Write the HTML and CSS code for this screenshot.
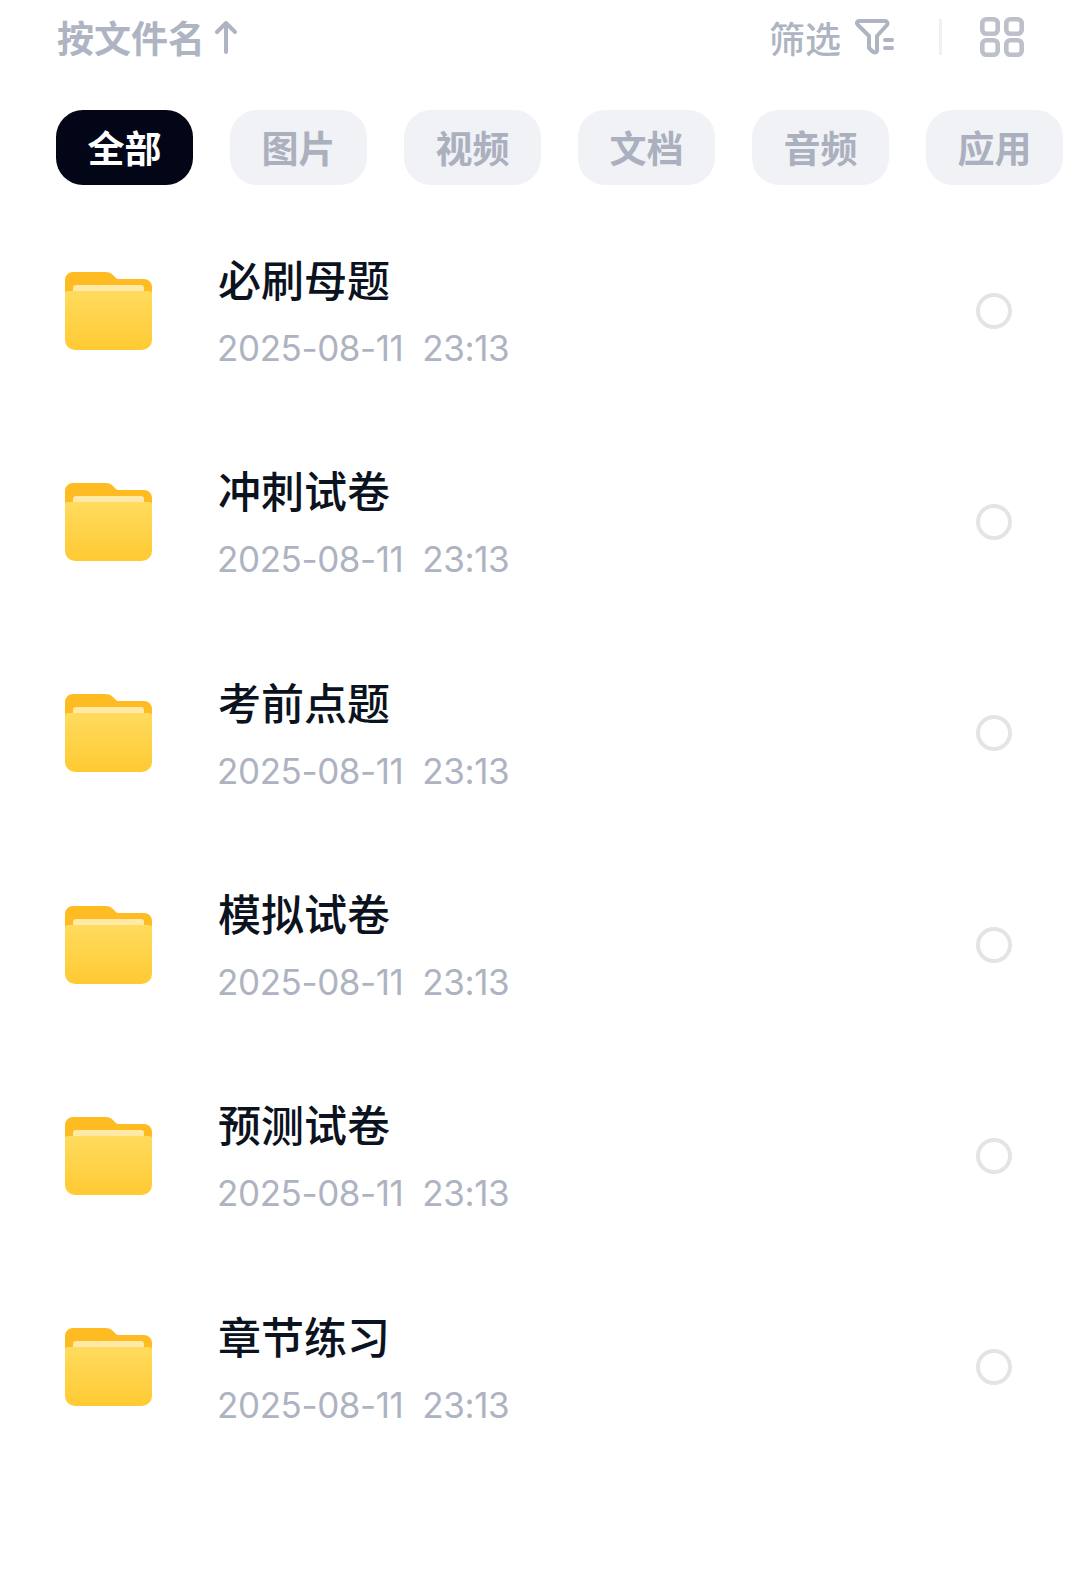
FILE: index.html
```html
<!DOCTYPE html>
<html lang="zh-CN">
<head>
    <meta charset="UTF-8">
    <meta name="viewport" content="width=device-width, initial-scale=1.0">
    <title>文件列表</title>
    <link rel="stylesheet" href="styles.css">
</head>
<body>
    <svg class="svg-defs" width="0" height="0">
        <defs>
            <linearGradient id="folderFront" x1="0" y1="0" x2="0" y2="1">
                <stop offset="0" stop-color="#ffdb5e"/>
                <stop offset="1" stop-color="#ffca33"/>
            </linearGradient>
            <symbol id="folder" viewBox="0 0 87 78">
                <path d="M0 8a8 8 0 0 1 8-8h32c4 0 6 1 8 3l3 3c1 1 2 1 4 1h24a8 8 0 0 1 8 8v20H0z" fill="#ffbb22"/>
                <rect x="8" y="13" width="71" height="20" rx="3" fill="#ffe9a6"/>
                <path d="M0 21c0-1 1-2 3-2h5h71h5c2 0 3 1 3 2v47a10 10 0 0 1-10 10H10A10 10 0 0 1 0 68z" fill="url(#folderFront)"/>
            </symbol>
        </defs>
    </svg>

    <div class="page">
        <div class="toolbar">
            <div class="sort">
                <span>按文件名</span>
                <svg class="sort-arrow" width="24" height="36" viewBox="0 0 24 36" fill="none" stroke="currentColor" stroke-width="4" stroke-linecap="round" stroke-linejoin="round">
                    <path d="M12 33V4M3 13l9-9 9 9"/>
                </svg>
            </div>
            <div class="tools">
                <span>筛选</span>
                <svg class="filter-icon" width="40" height="36" viewBox="0 0 40 36" fill="none" stroke="currentColor" stroke-width="4" stroke-linecap="round" stroke-linejoin="round">
                    <path d="M4 2h26c2 0 3 2 2 4L22 17v14c0 3-3 3-5 1l-3-3V17L3 6C1 4 2 2 4 2z"/>
                    <path d="M30 21h7M30 29h7"/>
                </svg>
                <i class="divider"></i>
                <svg class="grid-icon" width="44" height="40" viewBox="0 0 44 40" fill="none" stroke="currentColor" stroke-width="4.6">
                    <rect x="2.3" y="2.3" width="15.4" height="14.4" rx="4"/>
                    <rect x="26.3" y="2.3" width="15.4" height="14.4" rx="4"/>
                    <rect x="2.3" y="23.3" width="15.4" height="14.4" rx="4"/>
                    <rect x="26.3" y="23.3" width="15.4" height="14.4" rx="4"/>
                </svg>
            </div>
        </div>

        <div class="tabs">
            <div class="tab active">全部</div>
            <div class="tab">图片</div>
            <div class="tab">视频</div>
            <div class="tab">文档</div>
            <div class="tab">音频</div>
            <div class="tab">应用</div>
        </div>

        <ul class="file-list">
            <li class="file-row">
                <svg class="folder"><use href="#folder"/></svg>
                <div class="file-info">
                    <div class="file-name">必刷母题</div>
                    <div class="file-date">2025-08-11&nbsp; 23:13</div>
                </div>
                <i class="radio"></i>
            </li>
            <li class="file-row">
                <svg class="folder"><use href="#folder"/></svg>
                <div class="file-info">
                    <div class="file-name">冲刺试卷</div>
                    <div class="file-date">2025-08-11&nbsp; 23:13</div>
                </div>
                <i class="radio"></i>
            </li>
            <li class="file-row">
                <svg class="folder"><use href="#folder"/></svg>
                <div class="file-info">
                    <div class="file-name">考前点题</div>
                    <div class="file-date">2025-08-11&nbsp; 23:13</div>
                </div>
                <i class="radio"></i>
            </li>
            <li class="file-row">
                <svg class="folder"><use href="#folder"/></svg>
                <div class="file-info">
                    <div class="file-name">模拟试卷</div>
                    <div class="file-date">2025-08-11&nbsp; 23:13</div>
                </div>
                <i class="radio"></i>
            </li>
            <li class="file-row">
                <svg class="folder"><use href="#folder"/></svg>
                <div class="file-info">
                    <div class="file-name">预测试卷</div>
                    <div class="file-date">2025-08-11&nbsp; 23:13</div>
                </div>
                <i class="radio"></i>
            </li>
            <li class="file-row">
                <svg class="folder"><use href="#folder"/></svg>
                <div class="file-info">
                    <div class="file-name">章节练习</div>
                    <div class="file-date">2025-08-11&nbsp; 23:13</div>
                </div>
                <i class="radio"></i>
            </li>
        </ul>
    </div>
</body>
</html>
```

FILE: styles.css
```css
* {
    margin: 0;
    padding: 0;
    box-sizing: border-box;
}

body {
    width: 1080px;
    height: 1588px;
    overflow: hidden;
    background: #ffffff;
    font-family: "Noto Sans CJK SC", "Noto Sans", sans-serif;
}

.svg-defs {
    display: block;
    height: 0;
}

.page {
    display: flex;
    flex-direction: column;
}

.toolbar {
    height: 74px;
    padding: 0 56px 0 57px;
    display: flex;
    align-items: center;
    justify-content: space-between;
    color: #aeb4c2;
    font-size: 36px;
    font-weight: 500;
}

.sort {
    display: flex;
    align-items: center;
    gap: 9px;
    font-size: 37px;
    font-weight: 700;
}

.tools {
    display: flex;
    align-items: center;
}

.filter-icon {
    margin-left: 14px;
}

.divider {
    width: 3px;
    height: 36px;
    margin: 0 38px 0 44px;
    background: #eef0f3;
}

.grid-icon {
    color: #bcc0cb;
}

.tabs {
    margin-top: 36px;
    padding-left: 56px;
    display: flex;
    gap: 37px;
}

.tab {
    width: 137px;
    height: 75px;
    flex-shrink: 0;
    display: flex;
    align-items: center;
    justify-content: center;
    border-radius: 27px;
    background: #f0f2f6;
    color: #aab0be;
    font-size: 37px;
    font-weight: 700;
    padding-bottom: 2px;
}

.tab.active {
    background: #020617;
    color: #ffffff;
}

.file-list {
    margin-top: 20px;
    list-style: none;
}

.file-row {
    height: 211.3px;
    padding: 0 68px 0 65px;
    display: flex;
    align-items: center;
}

.folder {
    width: 87px;
    height: 78px;
    flex-shrink: 0;
}

.file-info {
    margin-left: 66px;
    flex: 1;
}

.file-name {
    color: #0b1220;
    font-size: 43px;
    font-weight: 500;
    line-height: 60px;
}

.file-date {
    margin-top: 15px;
    margin-left: -1px;
    color: #aeb3c1;
    font-family: Inter, "Noto Sans", sans-serif;
    font-size: 35px;
    font-weight: 400;
    letter-spacing: -0.4px;
    line-height: 50px;
}

.radio {
    width: 36px;
    height: 36px;
    border: 4px solid #e4e4e4;
    border-radius: 50%;
}
```
